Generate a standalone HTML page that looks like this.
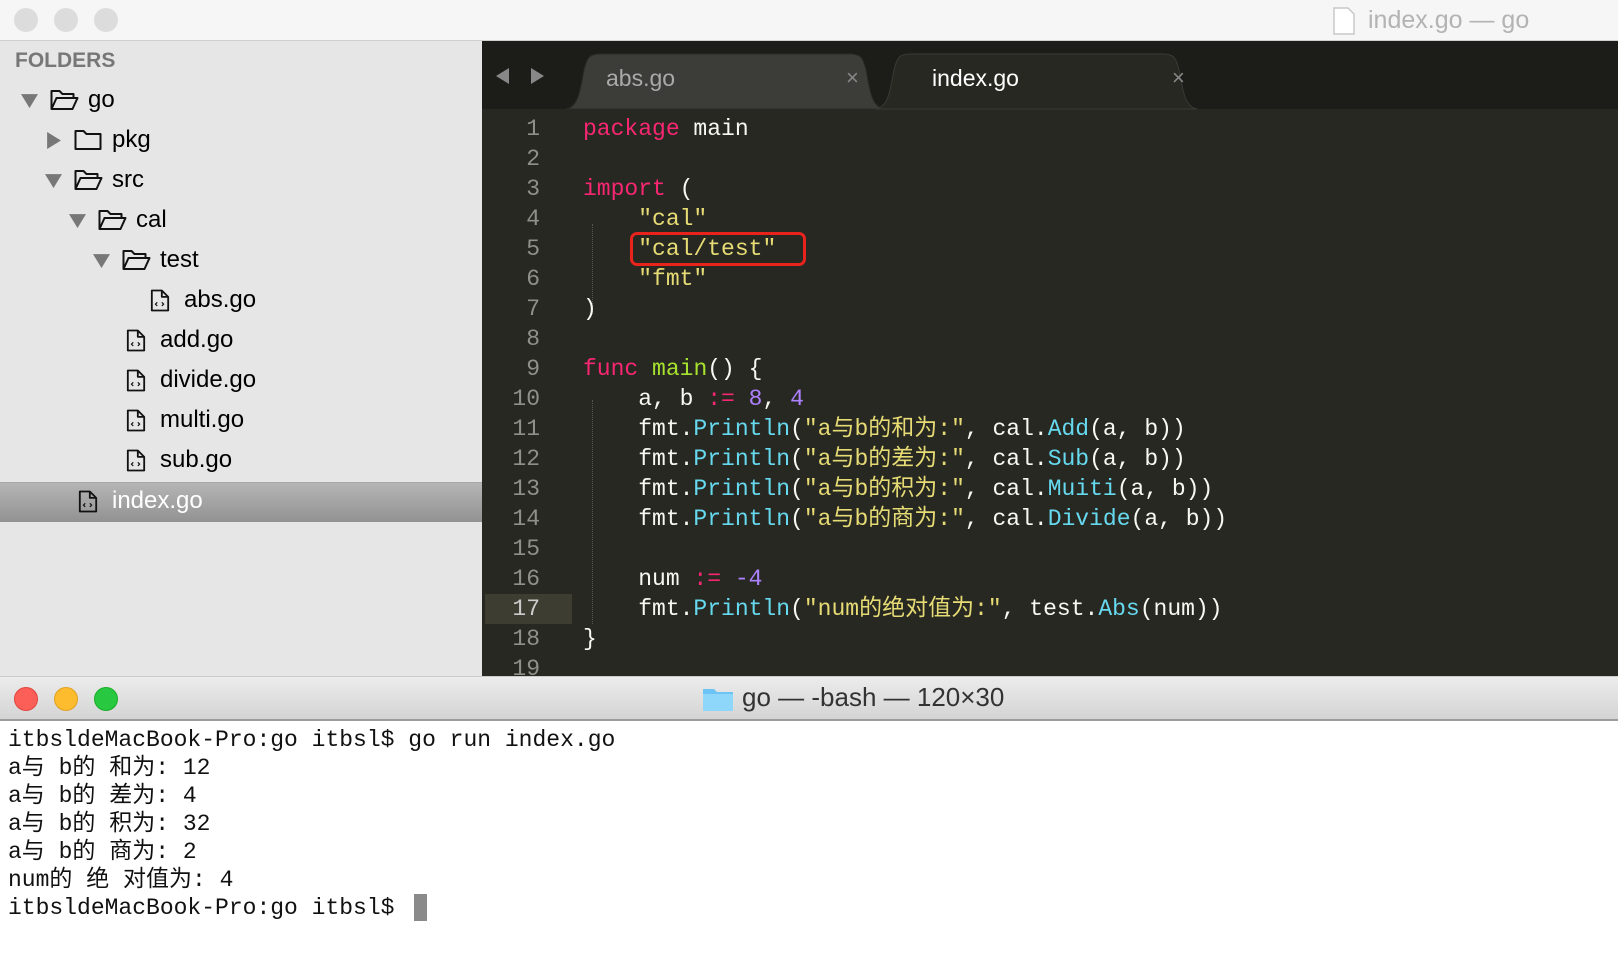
<!DOCTYPE html>
<html><head><meta charset="utf-8"><style>
*{margin:0;padding:0;box-sizing:border-box}
body{width:1618px;height:964px;overflow:hidden;background:#fff;position:relative;font-family:"Liberation Sans","Noto Sans CJK SC",sans-serif}
.abs{position:absolute}
.tl{position:absolute;width:24px;height:24px;border-radius:50%}
.side{left:0;top:41px;width:482px;height:635px;background:#e6e6e6}
.sb{font-size:24px}
.code{position:absolute;left:0;font-family:"Liberation Mono","Noto Sans CJK SC",monospace;font-size:23px;line-height:30px;height:30px;white-space:pre;color:#f8f8f2}
.ln{position:absolute;width:60px;text-align:right;left:480px;color:#8f908a;font-family:"Liberation Mono",monospace;font-size:23px;line-height:30px}
.k{color:#f92672}.s{color:#e6db74}.f{color:#a6e22e}.c{color:#66d9ef}.n{color:#ae81ff}
.t{position:absolute;left:8px;font-family:"Liberation Mono","Noto Sans CJK SC",monospace;font-size:23px;line-height:28px;white-space:pre;color:#111}
</style></head><body>
<div class="abs" style="left:0;top:0;width:1618px;height:41px;background:#f6f6f6;border-bottom:1px solid #d0d0d0"></div>
<div class="tl" style="left:14px;top:8px;background:#dcdcdc"></div>
<div class="tl" style="left:54px;top:8px;background:#dcdcdc"></div>
<div class="tl" style="left:94px;top:8px;background:#dcdcdc"></div>
<svg class="abs" style="left:1332px;top:6px" width="24" height="30"><path d="M2 2h14l6 6v20H2z" fill="#fff" stroke="#c8c8c8" stroke-width="1.5"/></svg>
<div class="abs" style="left:1368px;top:6px;font-size:25px;color:#b3b3b3">index.go — go</div>

<div class="abs side"></div>
<div class="abs" style="left:15px;top:49px;font-size:21px;color:#777;font-weight:bold">FOLDERS</div>
<svg width="0" height="0" style="position:absolute"><defs>
<symbol id="fo" viewBox="0 0 30 24"><path d="M2 21V3h8l3 3h11v4M2 21l5-11h21l-5 11z" fill="none" stroke="#111" stroke-width="2" stroke-linejoin="round"/></symbol>
<symbol id="fc" viewBox="0 0 30 24"><path d="M2 3h8l3 3h14v15H2z" fill="none" stroke="#111" stroke-width="2" stroke-linejoin="round"/></symbol>
<symbol id="fi" viewBox="0 0 22 26"><path d="M2 2h11l7 7v15H2z M13 2v7h7" fill="none" stroke="#111" stroke-width="2" stroke-linejoin="round"/><path d="M8 15l-2 2 2 2M13 15l2 2-2 2" fill="none" stroke="#111" stroke-width="1.3"/></symbol>
<symbol id="dn" viewBox="0 0 16 16"><path d="M0 2h16L8 15z" fill="#777"/></symbol>
<symbol id="rt" viewBox="0 0 16 16"><path d="M2 0v16L15 8z" fill="#777"/></symbol>
</defs></svg>
<svg class="abs" style="left:21px;top:92px" width="17" height="17"><use href="#dn"/></svg>
<svg class="abs" style="left:49px;top:88px" width="31" height="24"><use href="#fo"/></svg>
<div class="abs sb" style="left:88px;top:86px">go</div>
<svg class="abs" style="left:45px;top:132px" width="17" height="17"><use href="#rt"/></svg>
<svg class="abs" style="left:73px;top:128px" width="31" height="24"><use href="#fc"/></svg>
<div class="abs sb" style="left:112px;top:126px">pkg</div>
<svg class="abs" style="left:45px;top:172px" width="17" height="17"><use href="#dn"/></svg>
<svg class="abs" style="left:73px;top:168px" width="31" height="24"><use href="#fo"/></svg>
<div class="abs sb" style="left:112px;top:166px">src</div>
<svg class="abs" style="left:69px;top:212px" width="17" height="17"><use href="#dn"/></svg>
<svg class="abs" style="left:97px;top:208px" width="31" height="24"><use href="#fo"/></svg>
<div class="abs sb" style="left:136px;top:206px">cal</div>
<svg class="abs" style="left:93px;top:252px" width="17" height="17"><use href="#dn"/></svg>
<svg class="abs" style="left:121px;top:248px" width="31" height="24"><use href="#fo"/></svg>
<div class="abs sb" style="left:160px;top:246px">test</div>
<svg class="abs" style="left:150px;top:288px" width="20" height="25"><use href="#fi"/></svg>
<div class="abs sb" style="left:184px;top:286px">abs.go</div>
<svg class="abs" style="left:126px;top:328px" width="20" height="25"><use href="#fi"/></svg>
<div class="abs sb" style="left:160px;top:326px">add.go</div>
<svg class="abs" style="left:126px;top:368px" width="20" height="25"><use href="#fi"/></svg>
<div class="abs sb" style="left:160px;top:366px">divide.go</div>
<svg class="abs" style="left:126px;top:408px" width="20" height="25"><use href="#fi"/></svg>
<div class="abs sb" style="left:160px;top:406px">multi.go</div>
<svg class="abs" style="left:126px;top:448px" width="20" height="25"><use href="#fi"/></svg>
<div class="abs sb" style="left:160px;top:446px">sub.go</div>
<div class="abs" style="left:0;top:482px;width:482px;height:40px;background:linear-gradient(#b5b5b5,#929292);border-top:1px solid #a8a8a8"></div>
<svg class="abs" style="left:78px;top:489px" width="20" height="25"><use href="#fi"/></svg>
<div class="abs sb" style="left:112px;top:487px;color:#fff">index.go</div>

<div class="abs" style="left:482px;top:41px;width:1136px;height:635px;background:#272822"></div>
<div class="abs" style="left:482px;top:41px;width:1136px;height:68px;background:#1c1d19"></div>
<svg class="abs" style="left:496px;top:66px" width="60" height="20"><path d="M0 10L13 2v16z" fill="#888"/><path d="M35 2v16l13-8z" fill="#888"/></svg>
<svg class="abs" style="left:560px;top:52px" width="700" height="58">
<path d="M6 57C18 55 20 40 24 18 27 5 30 2 40 2H290c10 0 13 3 16 16 4 22 6 37 18 39z" fill="#3c3d38" stroke="#2a2a26"/>
<path d="M316 57C328 55 330 40 334 18 337 5 340 2 350 2H603c10 0 13 3 16 16 4 22 6 37 18 39z" fill="#272822" stroke="#3a3a35"/>
</svg>
<div class="abs" style="left:606px;top:65px;font-size:23px;color:#aaa">abs.go</div>
<div class="abs" style="left:846px;top:65px;font-size:22px;color:#888">×</div>
<div class="abs" style="left:932px;top:65px;font-size:23px;color:#fff">index.go</div>
<div class="abs" style="left:1172px;top:65px;font-size:22px;color:#888">×</div>

<div class="abs" style="left:485px;top:594px;width:87px;height:30px;background:#3e3d32"></div>
<div class="abs" style="left:592px;top:224px;border-left:1px dotted #555;height:90px"></div>
<div class="abs" style="left:592px;top:400px;border-left:1px dotted #555;height:224px"></div>

<div class="ln" style="top:114px">1</div><div class="ln" style="top:144px">2</div><div class="ln" style="top:174px">3</div><div class="ln" style="top:204px">4</div><div class="ln" style="top:234px">5</div><div class="ln" style="top:264px">6</div><div class="ln" style="top:294px">7</div><div class="ln" style="top:324px">8</div><div class="ln" style="top:354px">9</div><div class="ln" style="top:384px">10</div><div class="ln" style="top:414px">11</div><div class="ln" style="top:444px">12</div><div class="ln" style="top:474px">13</div><div class="ln" style="top:504px">14</div><div class="ln" style="top:534px">15</div><div class="ln" style="top:564px">16</div><div class="ln" style="top:594px;color:#ccc">17</div><div class="ln" style="top:624px">18</div><div class="ln" style="top:654px;height:22px;overflow:hidden">19</div>

<div class="code" style="left:583px;top:114px"><span class="k">package</span> main</div>
<div class="code" style="left:583px;top:174px"><span class="k">import</span> (</div>
<div class="code" style="left:583px;top:204px">    <span class="s">"cal"</span></div>
<div class="code" style="left:583px;top:234px">    <span class="s">"cal/test"</span></div>
<div class="code" style="left:583px;top:264px">    <span class="s">"fmt"</span></div>
<div class="code" style="left:583px;top:294px">)</div>
<div class="code" style="left:583px;top:354px"><span class="k">func</span> <span class="f">main</span>() {</div>
<div class="code" style="left:583px;top:384px">    a, b <span class="k">:=</span> <span class="n">8</span>, <span class="n">4</span></div>
<div class="code" style="left:583px;top:414px">    fmt.<span class="c">Println</span>(<span class="s">"a与b的和为:"</span>, cal.<span class="c">Add</span>(a, b))</div>
<div class="code" style="left:583px;top:444px">    fmt.<span class="c">Println</span>(<span class="s">"a与b的差为:"</span>, cal.<span class="c">Sub</span>(a, b))</div>
<div class="code" style="left:583px;top:474px">    fmt.<span class="c">Println</span>(<span class="s">"a与b的积为:"</span>, cal.<span class="c">Muiti</span>(a, b))</div>
<div class="code" style="left:583px;top:504px">    fmt.<span class="c">Println</span>(<span class="s">"a与b的商为:"</span>, cal.<span class="c">Divide</span>(a, b))</div>
<div class="code" style="left:583px;top:564px">    num <span class="k">:=</span> <span class="n">-4</span></div>
<div class="code" style="left:583px;top:594px">    fmt.<span class="c">Println</span>(<span class="s">"num的绝对值为:"</span>, test.<span class="c">Abs</span>(num))</div>
<div class="code" style="left:583px;top:624px">}</div>
<div class="abs" style="left:630px;top:232px;width:176px;height:34px;border:3px solid #e8231c;border-radius:7px"></div>

<div class="abs" style="left:0;top:676px;width:1618px;height:45px;background:linear-gradient(#ececec,#d4d4d4);border-bottom:2px solid #9c9c9c;border-top:1px solid #ccc"></div>
<div class="tl" style="left:14px;top:687px;background:#fc5f57;border:1px solid #e0443e"></div>
<div class="tl" style="left:54px;top:687px;background:#fdbc2e;border:1px solid #dea123"></div>
<div class="tl" style="left:94px;top:687px;background:#28c940;border:1px solid #1aab29"></div>
<svg class="abs" style="left:702px;top:686px" width="32" height="26"><path d="M1 3h11l3 3h16v19H1z" fill="#6cc4f4"/><path d="M1 8h30v17H1z" fill="#8fd6fb"/></svg>
<div class="abs" style="left:742px;top:682px;font-size:26px;color:#333">go — -bash — 120×30</div>

<div class="t" style="top:726px">itbsldeMacBook-Pro:go itbsl$ go run index.go</div>
<div class="t" style="top:754px">a与 b的 和为: 12</div>
<div class="t" style="top:782px">a与 b的 差为: 4</div>
<div class="t" style="top:810px">a与 b的 积为: 32</div>
<div class="t" style="top:838px">a与 b的 商为: 2</div>
<div class="t" style="top:866px">num的 绝 对值为: 4</div>
<div class="t" style="top:894px">itbsldeMacBook-Pro:go itbsl$ </div>
<div class="abs" style="left:414px;top:894px;width:13px;height:27px;background:#8a8a8a"></div>
</body></html>
